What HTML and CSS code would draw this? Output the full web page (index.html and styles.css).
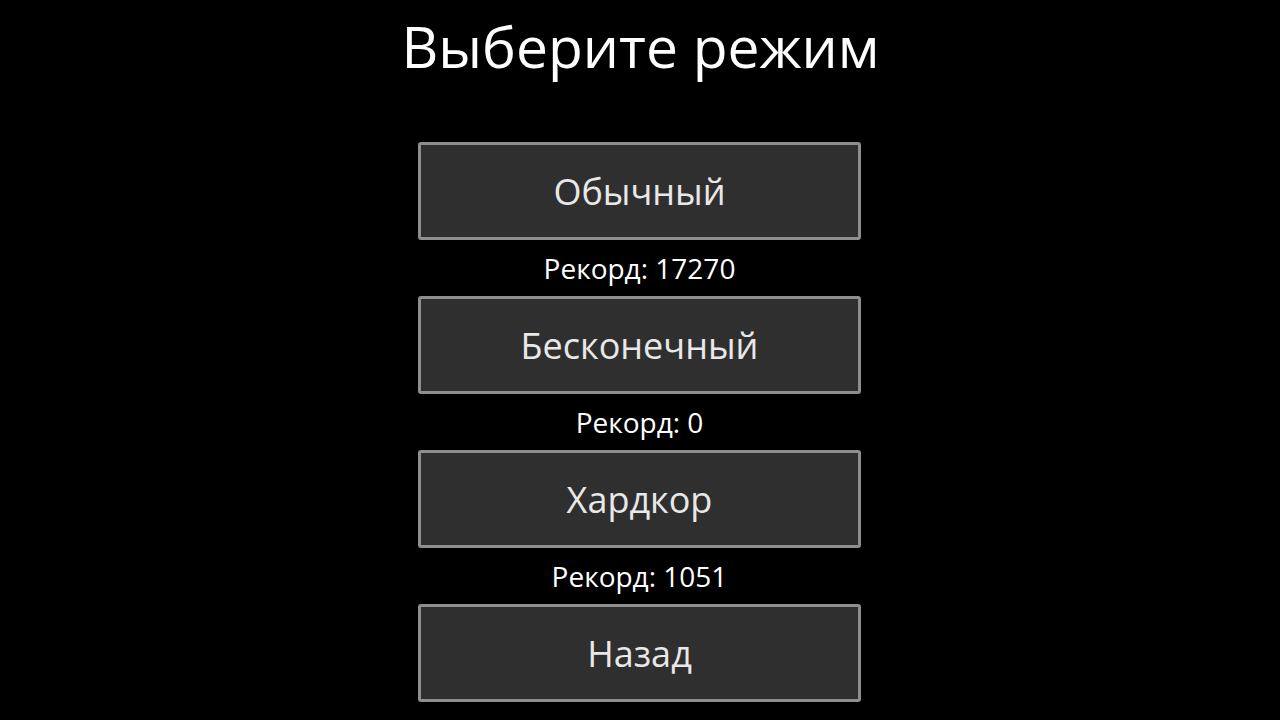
FILE: index.html
```html
<!DOCTYPE html>
<html lang="ru">
<head>
<meta charset="utf-8">
<title>Выберите режим</title>
<link rel="stylesheet" href="styles.css">
</head>
<body>
<main class="screen">
  <h1 class="title">Выберите режим</h1>
  <div class="menu">
    <button class="btn">Обычный</button>
    <div class="record">Рекорд: 17270</div>
    <button class="btn">Бесконечный</button>
    <div class="record">Рекорд: 0</div>
    <button class="btn">Хардкор</button>
    <div class="record">Рекорд: 1051</div>
    <button class="btn">Назад</button>
  </div>
</main>
</body>
</html>
```
FILE: styles.css
```css
html, body {
  margin: 0;
  padding: 0;
  background: #000;
  height: 100%;
  overflow: hidden;
}
.screen {
  display: flex;
  flex-direction: column;
  align-items: center;
  font-family: "Open Sans", "Noto Sans", sans-serif;
  color: #fff;
}
.title {
  margin: 0 0 50px 0;
  height: 92px;
  line-height: 92px;
  font-size: 57px;
  font-weight: 400;
  color: #fff;
  padding-left: 1px;
}
.menu {
  display: flex;
  flex-direction: column;
  align-items: stretch;
  width: 443px;
  margin-left: -1px;
}
.btn {
  height: 98px;
  box-sizing: border-box;
  border: 3px solid #8e8e8e;
  border-radius: 3px;
  background: #2f2f2f;
  color: #e8e8e8;
  font-family: "Open Sans", "Noto Sans", sans-serif;
  font-size: 36px;
  padding: 0;
  cursor: pointer;
}
.record {
  height: 56px;
  line-height: 56px;
  text-align: center;
  font-size: 28px;
  color: #fff;
}
```
